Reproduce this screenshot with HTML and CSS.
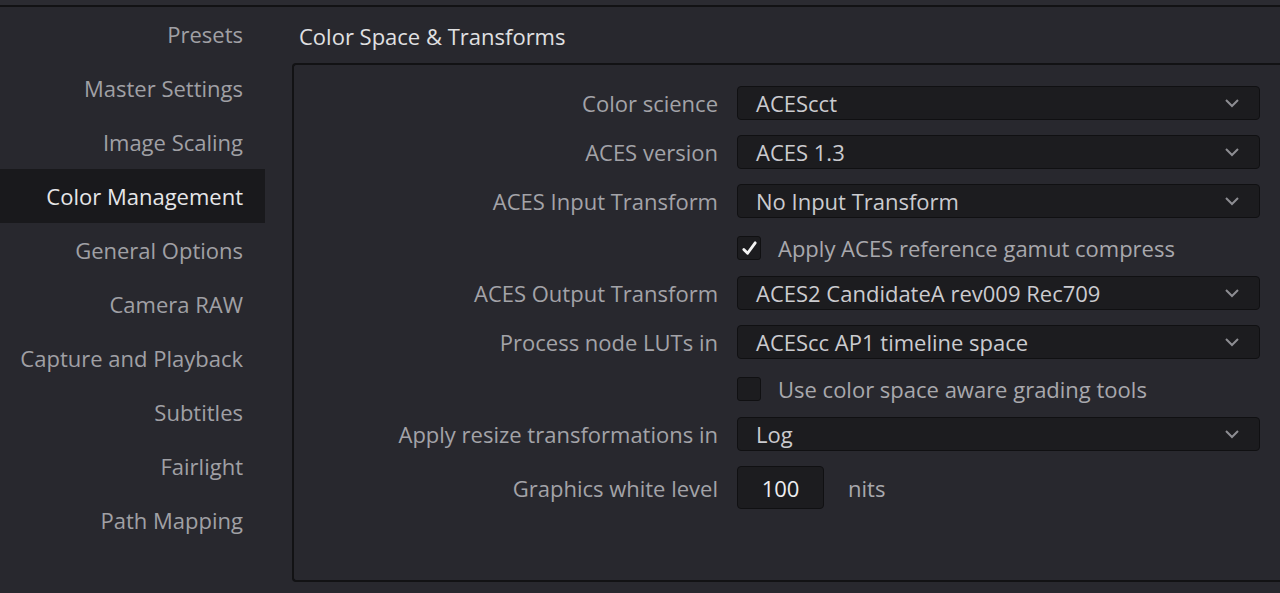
FILE: index.html
```
<!DOCTYPE html>
<html lang="en">
<head>
  <meta charset="UTF-8" />
  <meta name="viewport" content="width=device-width, initial-scale=1.0" />
  <title>Project Settings</title>
  <link rel="stylesheet" href="styles.css">
</head>
<body>
  <div class="top-strip"></div>

  <div class="settings">
    <!-- Left navigation -->
    <nav class="side-nav">
      <div class="nav-item">Presets</div>
      <div class="nav-item">Master Settings</div>
      <div class="nav-item">Image Scaling</div>
      <div class="nav-item active">Color Management</div>
      <div class="nav-item">General Options</div>
      <div class="nav-item">Camera RAW</div>
      <div class="nav-item">Capture and Playback</div>
      <div class="nav-item">Subtitles</div>
      <div class="nav-item">Fairlight</div>
      <div class="nav-item">Path Mapping</div>
    </nav>

    <main class="content">
      <h2 class="section-title">Color Space &amp; Transforms</h2>

      <div class="panel">
        <div class="form-row">
          <label class="field-label">Color science</label>
          <div class="dropdown">ACEScct<svg class="chevron" viewBox="0 0 16 10"><path d="M2 2 L8 8 L14 2" /></svg></div>
        </div>
        <div class="form-row">
          <label class="field-label">ACES version</label>
          <div class="dropdown">ACES 1.3<svg class="chevron" viewBox="0 0 16 10"><path d="M2 2 L8 8 L14 2" /></svg></div>
        </div>
        <div class="form-row">
          <label class="field-label">ACES Input Transform</label>
          <div class="dropdown">No Input Transform<svg class="chevron" viewBox="0 0 16 10"><path d="M2 2 L8 8 L14 2" /></svg></div>
        </div>
        <div class="form-row check-row">
          <span class="field-label"></span>
          <div class="check-field">
            <span class="checkbox checked">
              <svg viewBox="0 0 20 20"><path d="M4 11 L8 15 L16 4" /></svg>
            </span>
            <span class="check-text">Apply ACES reference gamut compress</span>
          </div>
        </div>
        <div class="form-row">
          <label class="field-label">ACES Output Transform</label>
          <div class="dropdown">ACES2 CandidateA rev009 Rec709<svg class="chevron" viewBox="0 0 16 10"><path d="M2 2 L8 8 L14 2" /></svg></div>
        </div>
        <div class="form-row">
          <label class="field-label">Process node LUTs in</label>
          <div class="dropdown">ACEScc AP1 timeline space<svg class="chevron" viewBox="0 0 16 10"><path d="M2 2 L8 8 L14 2" /></svg></div>
        </div>
        <div class="form-row check-row">
          <span class="field-label"></span>
          <div class="check-field">
            <span class="checkbox"></span>
            <span class="check-text">Use color space aware grading tools</span>
          </div>
        </div>
        <div class="form-row">
          <label class="field-label">Apply resize transformations in</label>
          <div class="dropdown">Log<svg class="chevron" viewBox="0 0 16 10"><path d="M2 2 L8 8 L14 2" /></svg></div>
        </div>
        <div class="form-row nits-row">
          <label class="field-label">Graphics white level</label>
          <div class="nits-field">
            <div class="num-input">100</div>
            <span class="unit">nits</span>
          </div>
        </div>
      </div>
    </main>
  </div>
</body>
</html>
```

FILE: styles.css
```
body {
  font-family: 'Open Sans', 'Noto Sans', sans-serif;
  background-color: #28282e;
  color: #a3a3a8;
  margin: 0;
  height: 593px;
  overflow: hidden;
  font-size: 22px;
}

.top-strip {
  height: 5px;
  background-color: #2b2b31;
  border-bottom: 2px solid #121214;
}

.settings {
  display: flex;
}

/* Left navigation */
.side-nav {
  width: 265px;
  flex-shrink: 0;
}

.nav-item {
  height: 54px;
  line-height: 54px;
  text-align: right;
  padding-right: 22px;
  color: #a0a0a5;
  white-space: nowrap;
}

.nav-item.active {
  background-color: #19191c;
  color: #e6e6e8;
}

/* Content */
.content {
  flex: 1;
  padding-left: 27px;
}

.section-title {
  margin: 0;
  font-size: 22px;
  font-weight: 400;
  color: #e0e0e2;
  height: 56px;
  line-height: 58px;
  padding-left: 7px;
}

.panel {
  border: 2px solid #121214;
  border-right: none;
  border-radius: 4px 0 0 4px;
  height: 519px;
  box-sizing: border-box;
  padding-top: 21px;
}

/* rows are blocks, so their vertical margins collapse */
.form-row {
  display: flex;
  align-items: center;
  height: 34px;
  margin-bottom: 15px;
}

.field-label {
  width: 443px;
  flex-shrink: 0;
  text-align: right;
  padding-right: 19px;
  box-sizing: border-box;
  white-space: nowrap;
  color: #a3a3a8;
}

.dropdown {
  width: 523px;
  height: 34px;
  box-sizing: border-box;
  background-color: #1c1c1f;
  border: 1px solid #101012;
  border-radius: 4px;
  display: flex;
  align-items: center;
  justify-content: space-between;
  padding: 0 19px 0 18px;
  color: #cbcbcf;
  white-space: nowrap;
}

.chevron {
  width: 16px;
  height: 10px;
  flex-shrink: 0;
  fill: none;
  stroke: #8d8d92;
  stroke-width: 2;
}

.check-row {
  height: 30px;
  margin-bottom: 13px;
}

.check-field {
  display: flex;
  align-items: center;
  gap: 17px;
}

.checkbox {
  width: 24px;
  height: 24px;
  box-sizing: border-box;
  background-color: #1c1c1f;
  border: 1px solid #101012;
  border-radius: 3px;
  display: flex;
  align-items: center;
  justify-content: center;
}

.checkbox svg {
  width: 19px;
  height: 19px;
  fill: none;
  stroke: #f4f4f4;
  stroke-width: 3;
  stroke-linecap: round;
  stroke-linejoin: round;
}

.check-text {
  color: #a8a8ad;
  white-space: nowrap;
}

.nits-row {
  height: 43px;
  margin-top: 15px;
}

.nits-field {
  display: flex;
  align-items: center;
  gap: 24px;
}

.num-input {
  width: 87px;
  height: 43px;
  box-sizing: border-box;
  background-color: #1c1c1f;
  border: 1px solid #101012;
  border-radius: 4px;
  display: flex;
  align-items: center;
  justify-content: center;
  color: #ededf0;
}

.unit {
  color: #a8a8ad;
}
```
